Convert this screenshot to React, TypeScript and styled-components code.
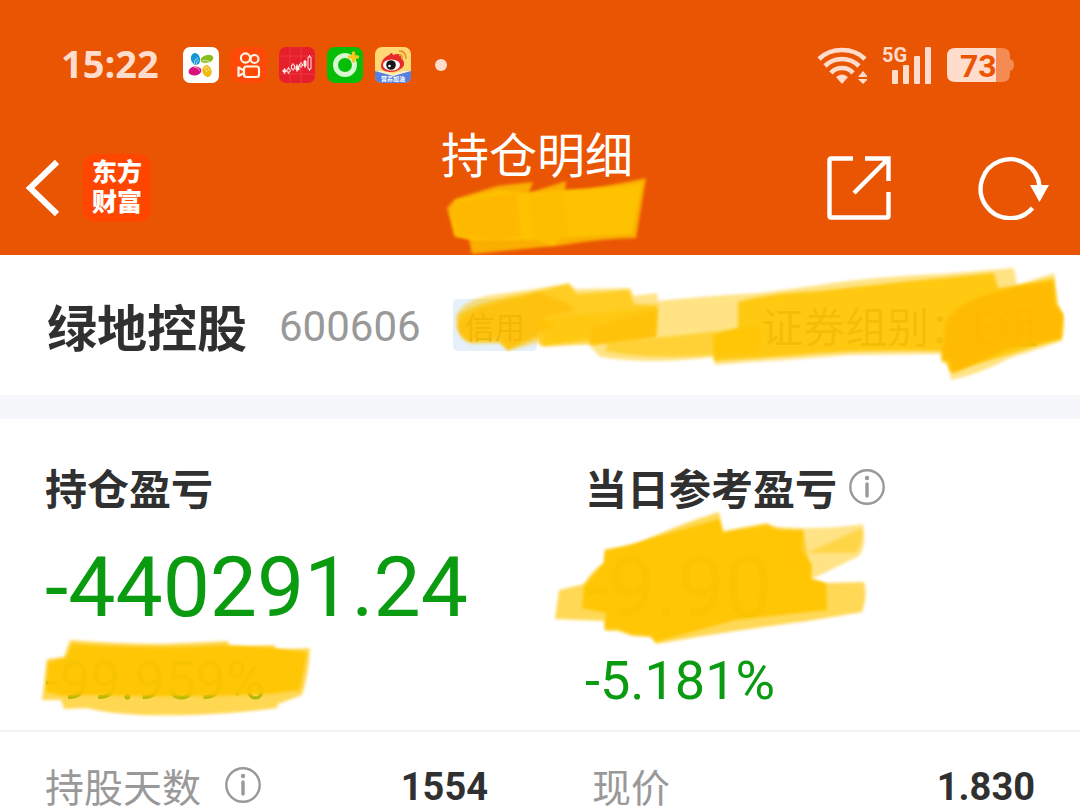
import React from "react";
import styled, { createGlobalStyle } from "styled-components";

const cjk = '"Noto Sans CJK SC", sans-serif';
const latin = 'Roboto, "Noto Sans CJK SC", sans-serif';
const pale = "#ffdccb";

const GlobalStyle = createGlobalStyle`
  * { box-sizing: border-box; }
  body { margin: 0; background: #fff; color: #303030; font-family: ${cjk}; }
  h1, h2, p, dl, dt, dd { margin: 0; font-weight: 400; }
  svg { display: block; flex: none; }
`;

const Header = styled.header`
  background: #ea5504;
  color: #fff;
`;

const StatusBar = styled.div`
  display: flex;
  align-items: center;
  justify-content: space-between;
  height: 120px;
  padding: 10px 66px 0 61px;
`;

const StatusGroup = styled.div<{ $gap: number }>`
  display: flex;
  align-items: center;
  gap: ${(p) => p.$gap}px;
`;

const Clock = styled.time`
  margin-right: 12px;
  padding-bottom: 4px;
  font: 700 38px/48px "Open Sans", sans-serif;
  color: ${pale};
`;

const Dot = styled.span`
  width: 12px;
  height: 12px;
  margin-left: 12px;
  border-radius: 50%;
  background: ${pale};
`;

const Nav = styled.nav`
  display: grid;
  grid-template-columns: 1fr auto 1fr;
  align-items: center;
  height: 135px;
  padding: 0 30px 0 24px;
`;

const NavSide = styled.div<{ $end?: boolean }>`
  display: flex;
  align-items: center;
  justify-content: ${(p) => (p.$end ? "flex-end" : "flex-start")};
  gap: ${(p) => (p.$end ? 86 : 20)}px;
`;

const IconButton = styled.button`
  padding: 0;
  border: 0;
  background: none;
  color: inherit;
  cursor: pointer;
`;

const BrandLogo = styled.div`
  display: grid;
  place-content: center;
  width: 68px;
  height: 68px;
  padding-bottom: 6px;
  border-radius: 13px;
  background: #ff4600;
  font: 900 25px/30px ${cjk};
  text-align: center;
`;

const TitleBlock = styled.div`
  display: flex;
  flex-direction: column;
  align-items: center;
  gap: 6px;
`;

const Title = styled.h1`
  font-size: 48px;
  line-height: 54px;
`;

const Security = styled.section`
  position: relative;
  display: flex;
  align-items: center;
  height: 140px;
  padding: 0 42px 0 47px;
`;

const Name = styled.h2`
  font-size: 50px;
  line-height: 60px;
  font-weight: 700;
`;

const Code = styled.span`
  margin-left: 32px;
  padding-top: 4px;
  font: 400 42px/60px ${latin};
  color: #999;
`;

const Tag = styled.span`
  margin-left: 32px;
  width: 84px;
  border-radius: 5px;
  background: #e6f0fb;
  color: #3c5a66;
  font-size: 30px;
  line-height: 52px;
  text-align: center;
`;

const Group = styled.span`
  margin-left: auto;
  font-size: 42px;
  line-height: 60px;
  color: #6c6c6c;
  white-space: nowrap;
`;

const Divider = styled.div`
  height: 24px;
  background: #f6f7fa;
`;

const Summary = styled.section`
  display: grid;
  grid-template-columns: 1fr 1fr;
  height: 313px;
  padding-top: 38px;
  border-bottom: 2px solid #f2f2f2;
`;

const Metric = styled.div`
  position: relative;
  padding-left: 45px;
`;

const MetricLabel = styled.h2`
  display: flex;
  align-items: center;
  gap: 12px;
  font-size: 42px;
  line-height: 60px;
  font-weight: 700;
`;

const Amount = styled.p`
  font: 400 84px/100px ${latin};
  margin-top: 21px;
  color: #0a9b10;
`;

const Percent = styled.p`
  font: 400 54px/64px ${latin};
  margin-top: 11px;
  color: #0a9b10;
`;

const Details = styled.dl`
  display: grid;
  grid-template-columns: 1fr 1fr;
  gap: 104px;
  padding: 30px 45px 0;
`;

const Detail = styled.div`
  display: flex;
  align-items: center;
  justify-content: space-between;
`;

const Term = styled.dt`
  display: flex;
  align-items: center;
  gap: 24px;
  padding-bottom: 4px;
  font-size: 39px;
  line-height: 46px;
  color: #999;
`;

const Value = styled.dd`
  font: 700 38px/50px ${latin};
`;

const InfoButton = styled(IconButton)`
  color: #999;
`;

const Marker = styled.svg<{ $left?: number; $right?: number; $top: number }>`
  position: absolute;
  top: ${(p) => p.$top}px;
  ${(p) => (p.$left === undefined ? `right: ${p.$right ?? 0}px;` : `left: ${p.$left}px;`)}
  overflow: visible;
  pointer-events: none;
`;

const OverflowSvg = styled.svg`
  overflow: visible;
`;

type Stroke = [path: string, opacity: number, color?: string];

const Strokes = ({ id, items }: { id: string; items: Stroke[] }) => (
  <>
    <filter id={id} x="-5%" y="-10%" width="110%" height="120%">
      <feGaussianBlur stdDeviation="1.6" />
    </filter>
    {items.map(([d, opacity, color], i) => (
      <path key={i} d={d} fill={color ?? "#ffc505"} opacity={opacity} filter={`url(#${id})`} />
    ))}
  </>
);

const titleStrokes: Stroke[] = [
  ["M450 208L458 199L500 186L536 182L532 193L569 181L568 191Q610 187 649 178L639 238Q600 239 566 245L475 254L472 239L458 237Z", 0.8],
  ["M459 201L502 190L532 193L565 190Q610 190 645 183L635 234L565 238L556 245L538 240L475 240L458 235L454 214Z", 0.9],
  ["M459 202L520 192L524 236L500 240L462 236L454 214Z", 0.65, "#ffb400"],
  ["M530 197L567 190L573 240L556 246L537 240Z", 0.25, "#ffb400"],
];

const securityStrokes: Stroke[] = [
  ["M456 316Q462 300 492 295L541 288L569 283L575 289L630 288L634 296L657 293L658 301Q720 295 760 293L820 285Q870 277 940 274L1014 268L1017 285L1054 273L1058 304Q1068 320 1062 341L1010 358Q980 374 951 380L949 363L942 363L940 354L850 355Q790 360 750 362L715 365L713 357Q650 365 600 357L588 344L544 347L537 343L508 351L500 343L472 344Q455 340 456 316Z", 0.48],
  ["M458 315Q475 302 530 293L568 284L577 294L629 290L634 304L658 305L656 337L592 345L588 339L542 346L537 338L508 350L499 342L470 342Q457 336 458 315Z", 0.72],
  ["M457 325Q465 312 492 305L539 292L570 304L575 311L542 318L555 325L538 334L508 349L499 337L472 340Q459 340 457 325Z", 0.55, "#ffb900"],
  ["M540 318L657 308L656 337L592 344L545 345Z", 0.5],
  ["M590 328L620 320L658 310L656 337L592 345Z", 0.35, "#ffb700"],
  ["M608 342Q670 337 735 329L760 325L760 352L713 355Q650 360 605 351Z", 0.58],
  ["M738 302Q770 293 820 291L900 282L994 273L998 288L1015 286L1054 278L1057 305L1063 315L1061 339L950 372L941 351Q850 350 800 355L714 361L713 335L738 328Z", 0.86],
  ["M945 323Q955 304 988 294L1018 286L1052 282L1055 304L1063 315L1061 338L1010 348L952 374L950 360L942 361Z", 0.85, "#ffb900"],
];

const dailyStrokes: Stroke[] = [
  ["M559 590L584 584Q592 570 604 563L605 549L631 547Q670 527 719 512L723 531L767 523L780 529L803 530L812 579L824 583L864 582Q868 595 862 612L808 621Q730 631 686 639L656 644L651 637L632 636L618 631L605 631L604 621L555 619Z", 0.66],
  ["M775 527Q825 530 863 524Q867 546 859 556L806 582Z", 0.48],
  ["M584 586L604 563L605 551L632 544L719 519L723 533L766 525L780 531L803 531L801 550L812 565L810 579L826 583L827 610L735 620L656 642L651 636L632 634L618 629L605 629L606 613L582 608Z", 0.94],
  ["M807 553L862 528Q864 545 855 553Z", 0.45],
];

const totalStrokes: Stroke[] = [
  ["M47 659L64 657L70 640Q120 644 164 644L228 641L229 647L274 645L276 650L310 648Q309 674 302 695L278 704L277 708Q235 714 190 715Q120 717 87 708L64 709L61 700L42 700Z", 0.68],
  ["M48 662L66 658L72 644Q150 650 228 645L274 648L307 652L300 690L270 694Q180 698 90 695L63 696L46 692Z", 0.92],
];

const WifiIcon = () => (
  <svg width="52" height="38" viewBox="0 0 52 38" fill="none" stroke={pale} strokeWidth="4.600">
    <path d="M4 13Q13 4 27 4T50 13M10 20Q17 13 27 13T44 20M16 27Q20 22 27 22T38 27" />
    <path d="M21 31Q27 26 33 31L27 38ZM43 31L48 25L53 31ZM43 33H53L48 38Z" fill={pale} stroke="none" />
  </svg>
);

const SignalIcon = () => (
  <OverflowSvg width="48" height="38" viewBox="0 0 48 38" fill={pale}>
    <text x="-1" y="16" fontFamily="Roboto, sans-serif" fontWeight="700" fontSize="20">5G</text>
    <rect x="9" y="24" width="6" height="14" rx="1" />
    <rect x="20" y="19" width="6" height="19" rx="1" />
    <rect x="31" y="10" width="6" height="28" rx="1" />
    <rect x="42" y="1" width="6" height="37" rx="1" />
  </OverflowSvg>
);

const BatteryIcon = () => (
  <svg width="67" height="36" viewBox="0 -1 67 36">
    <path d="M49 0H55Q63 0 63 8V11Q67 12 67 17T63 23V26Q63 34 55 34H49Z" fill="#f48b53" />
    <path d="M8 0H49V34H8Q0 34 0 26V8Q0 0 8 0Z" fill={pale} />
    <text x="13" y="29" fontFamily="Roboto, sans-serif" fontWeight="700" fontSize="32" fill="#ea5504">73</text>
  </svg>
);

const AppIcons = () => (
  <>
    <svg width="36" height="36" viewBox="0 0 36 36">
      <rect width="36" height="36" rx="7" fill="#fff" />
      <ellipse cx="12.500" cy="12" rx="4.500" ry="6" fill="#1598d5" transform="rotate(-15 12.500 12)" />
      <ellipse cx="24" cy="12" rx="6.500" ry="4" fill="#87bd1d" transform="rotate(-15 24 12)" />
      <ellipse cx="12" cy="24" rx="6.500" ry="4.500" fill="#d9127d" transform="rotate(-8 12 24)" />
      <ellipse cx="24" cy="24" rx="4.500" ry="6" fill="#f0b90b" transform="rotate(-18 24 24)" />
      <path d="M11 17Q11 12 15 11M13 18Q13 14 16 13M19 14Q23 12 27 15M20 16L25 16M11 20Q15 20 17 24M14 19L17 21M20 20Q23 21 24 25M22 19Q26 21 27 24" fill="none" stroke="#fff" strokeWidth="0.600" />
    </svg>
    <svg width="36" height="36" viewBox="0 0 36 36" fill="none" stroke="#fff3e8" strokeWidth="2.200">
      <rect width="36" height="36" rx="8" fill="#ff4a07" stroke="none" />
      <circle cx="14.500" cy="11" r="4.600" />
      <circle cx="23.500" cy="12" r="4" />
      <rect x="13" y="19.500" width="15" height="10.500" rx="2.500" />
      <path d="M13 23.500L7.500 20.500V29L13 26" strokeLinejoin="round" />
    </svg>
    <svg width="36" height="36" viewBox="0 0 36 36">
      <rect width="36" height="36" rx="7" fill="#e51f2b" />
      <path d="M11 0V36M22 0V36M0 9H36M0 27H36" stroke="#f04a50" strokeWidth="0.600" />
      <g fill="#ffe9e4" stroke="#ffe9e4">
        <path d="M5.500 21V27M9.500 20V27M14 16V24M18 17V25M22 15V21M26 13V21M30.500 8V24" strokeWidth="0.900" />
        <path d="M4 23H7V25H4ZM17 19H20V23H17ZM25 14H27V19H25Z" />
        <path d="M8 22H11V25H8ZM12.500 18H15.500V22H12.500ZM20.500 17H23.500V19H20.500ZM29 10H32V22H29Z" fill="#e51f2b" />
      </g>
    </svg>
    <svg width="36" height="36" viewBox="0 0 36 36">
      <rect width="36" height="36" rx="8" fill="#06bd08" />
      <circle cx="18" cy="18" r="9.500" fill="none" stroke="#d7f8d1" strokeWidth="5" />
      <path d="M26.500 6V14M22.500 10H30.500" stroke="#f5c81b" strokeWidth="3.400" strokeLinecap="round" />
    </svg>
    <svg width="36" height="36" viewBox="0 0 36 36">
      <rect width="36" height="36" rx="7" fill="#ffd875" />
      <path d="M0 24Q10 23 18 28Q26 23 36 24V29Q36 36 29 36H7Q0 36 0 29Z" fill="#5680df" />
      <path d="M0 24Q10 23 18 27Q26 23 36 24L18 29Z" fill="#fff0c4" />
      <path d="M6 18Q7 11 14 8Q17 4 18 8Q27 5 26 11Q31 15 28 20Q23 25 15 25Q5 24 6 18Z" fill="#e92b28" />
      <ellipse cx="16.500" cy="18" rx="8.500" ry="5.500" fill="#fff" />
      <circle cx="16" cy="18" r="4.800" fill="#161616" />
      <circle cx="14.500" cy="19" r="1.300" fill="#fff" />
      <path d="M24 4Q31 4 31 12M24 8Q28 8 27 12" fill="none" stroke="#e89b25" strokeWidth="1.800" />
      <text x="18" y="34" textAnchor="middle" fontFamily="Noto Sans CJK SC, sans-serif" fontWeight="700" fontSize="6" fill="#fff">营养加油</text>
    </svg>
  </>
);

const InfoIcon = () => (
  <svg width="36" height="36" viewBox="0 0 36 36" fill="none" stroke="currentColor">
    <circle cx="18" cy="18" r="16.700" strokeWidth="2.400" />
    <path d="M18 15V27" strokeWidth="3.400" strokeLinecap="round" />
    <circle cx="18" cy="9" r="2.200" fill="currentColor" stroke="none" />
  </svg>
);

export default function App() {
  return (
    <>
      <GlobalStyle />
      <Header>
        <StatusBar>
          <StatusGroup $gap={12}>
            <Clock>15:22</Clock>
            <AppIcons />
            <Dot />
          </StatusGroup>
          <StatusGroup $gap={16}>
            <WifiIcon />
            <SignalIcon />
            <BatteryIcon />
          </StatusGroup>
        </StatusBar>
        <Nav>
          <NavSide>
            <IconButton aria-label="返回">
              <svg width="39" height="60" viewBox="0 0 39 60" fill="none" stroke="currentColor" strokeWidth="6">
                <path d="M33 4L6 30L33 56" />
              </svg>
            </IconButton>
            <BrandLogo>
              <span>东方</span>
              <span>财富</span>
            </BrandLogo>
          </NavSide>
          <TitleBlock>
            <Title>持仓明细</Title>
            <OverflowSvg width="220" height="66" viewBox="430 185 220 66" aria-hidden="true">
              <Strokes id="soft-title" items={titleStrokes} />
            </OverflowSvg>
          </TitleBlock>
          <NavSide $end>
            <IconButton aria-label="分享">
              <svg width="64" height="64" viewBox="0 0 64 64" fill="none" stroke="currentColor" strokeWidth="4.400">
                <path d="M26 2.500H4Q2.500 2.500 2.500 4V60Q2.500 61.500 4 61.500H60Q61.500 61.500 61.500 60V36" />
                <path d="M38 2.500H61.500V25M61 3L27 37" />
              </svg>
            </IconButton>
            <IconButton aria-label="刷新">
              <svg width="73" height="64" viewBox="0 0 73 64" fill="none" stroke="currentColor" strokeWidth="4.400">
                <path d="M55.500 52A29.500 29.500 0 1 1 62.500 30" />
                <path d="M53 29H72L62.500 46Z" fill="currentColor" stroke="none" />
              </svg>
            </IconButton>
          </NavSide>
        </Nav>
      </Header>
      <main>
        <Security>
          <Name>绿地控股</Name>
          <Code>600606</Code>
          <Tag>信用</Tag>
          <Group>证券组别：E组</Group>
          <Marker $right={0} $top={0} width="640" height="140" viewBox="440 255 640 140" aria-hidden="true">
            <Strokes id="soft-security" items={securityStrokes} />
          </Marker>
        </Security>
        <Divider />
        <Summary>
          <Metric>
            <MetricLabel>持仓盈亏</MetricLabel>
            <Amount>-440291.24</Amount>
            <Percent>-99.959%</Percent>
            <Marker $left={40} $top={178} width="275" height="86" viewBox="40 635 275 86" aria-hidden="true">
              <Strokes id="soft-total" items={totalStrokes} />
            </Marker>
          </Metric>
          <Metric>
            <MetricLabel>
              当日参考盈亏
              <InfoButton aria-label="当日参考盈亏说明">
                <InfoIcon />
              </InfoButton>
            </MetricLabel>
            <Amount>-9.90</Amount>
            <Percent>-5.181%</Percent>
            <Marker $left={10} $top={53} width="320" height="140" viewBox="550 510 320 140" aria-hidden="true">
              <Strokes id="soft-daily" items={dailyStrokes} />
            </Marker>
          </Metric>
        </Summary>
        <Details>
          <Detail>
            <Term>
              持股天数
              <InfoButton aria-label="持股天数说明">
                <InfoIcon />
              </InfoButton>
            </Term>
            <Value>1554</Value>
          </Detail>
          <Detail>
            <Term>现价</Term>
            <Value>1.830</Value>
          </Detail>
        </Details>
      </main>
    </>
  );
}
